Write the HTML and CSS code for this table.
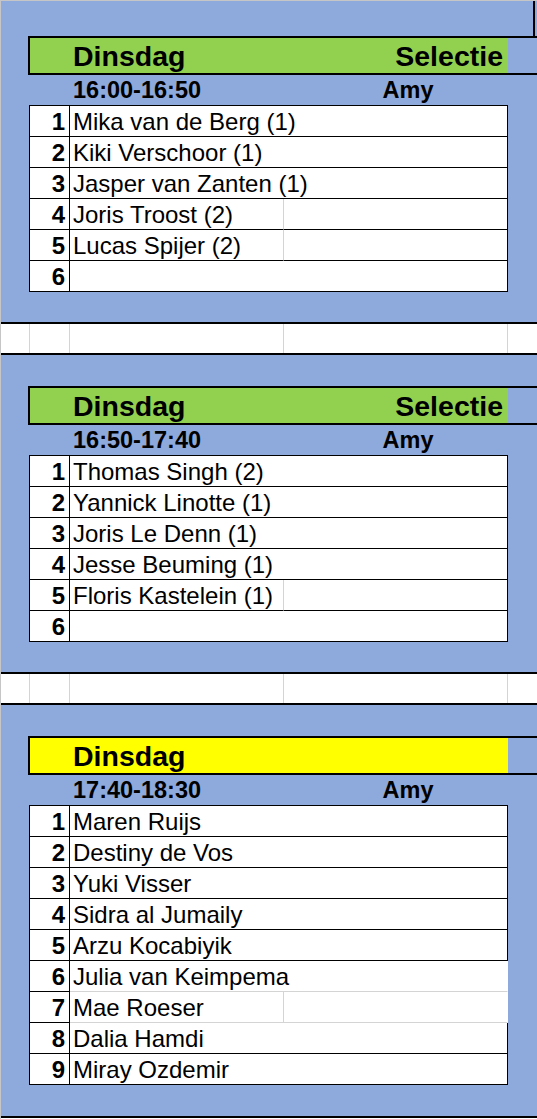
FILE: index.html
```html
<!DOCTYPE html>
<html lang="nl">
<head>
<meta charset="utf-8">
<title>Dinsdag rooster</title>
<link rel="stylesheet" href="styles.css">
</head>
<body>
<div class="sheet">

  <section class="block">
    <div class="lead lead-first"></div>
    <div class="head green">
      <div class="fill"></div>
      <div class="fill day">Dinsdag</div>
      <div class="fill tag">Selectie</div>
      <div></div>
    </div>
    <div class="time">
      <div></div>
      <div class="slot">16:00-16:50</div>
      <div class="trainer">Amy</div>
    </div>
    <div class="roster">
      <div class="row"><div class="num">1</div><div class="c">Mika van de Berg (1)</div><div class="d"></div></div>
      <div class="row"><div class="num">2</div><div class="c">Kiki Verschoor (1)</div><div class="d"></div></div>
      <div class="row"><div class="num">3</div><div class="c">Jasper van Zanten (1)</div><div class="d"></div></div>
      <div class="row split"><div class="num">4</div><div class="c">Joris Troost (2)</div><div class="d"></div></div>
      <div class="row split"><div class="num">5</div><div class="c">Lucas Spijer (2)</div><div class="d"></div></div>
      <div class="row"><div class="num">6</div><div class="c"></div><div class="d"></div></div>
    </div>
    <div class="tail"></div>
  </section>

  <div class="sep"><span></span><span></span><span></span><span></span><span></span></div>

  <section class="block">
    <div class="lead"></div>
    <div class="head green">
      <div class="fill"></div>
      <div class="fill day">Dinsdag</div>
      <div class="fill tag">Selectie</div>
      <div></div>
    </div>
    <div class="time">
      <div></div>
      <div class="slot">16:50-17:40</div>
      <div class="trainer">Amy</div>
    </div>
    <div class="roster">
      <div class="row"><div class="num">1</div><div class="c">Thomas Singh (2)</div><div class="d"></div></div>
      <div class="row"><div class="num">2</div><div class="c">Yannick Linotte (1)</div><div class="d"></div></div>
      <div class="row"><div class="num">3</div><div class="c">Joris Le Denn (1)</div><div class="d"></div></div>
      <div class="row"><div class="num">4</div><div class="c">Jesse Beuming (1)</div><div class="d"></div></div>
      <div class="row split"><div class="num">5</div><div class="c">Floris Kastelein (1)</div><div class="d"></div></div>
      <div class="row"><div class="num">6</div><div class="c"></div><div class="d"></div></div>
    </div>
    <div class="tail"></div>
  </section>

  <div class="sep"><span></span><span></span><span></span><span></span><span></span></div>

  <section class="block">
    <div class="lead"></div>
    <div class="head yellow">
      <div class="fill"></div>
      <div class="fill day">Dinsdag</div>
      <div class="fill tag"></div>
      <div></div>
    </div>
    <div class="time">
      <div></div>
      <div class="slot">17:40-18:30</div>
      <div class="trainer">Amy</div>
    </div>
    <div class="roster">
      <div class="row"><div class="num">1</div><div class="c">Maren Ruijs</div><div class="d"></div></div>
      <div class="row"><div class="num">2</div><div class="c">Destiny de Vos</div><div class="d"></div></div>
      <div class="row"><div class="num">3</div><div class="c">Yuki Visser</div><div class="d"></div></div>
      <div class="row"><div class="num">4</div><div class="c">Sidra al Jumaily</div><div class="d"></div></div>
      <div class="row"><div class="num">5</div><div class="c">Arzu Kocabiyik</div><div class="d"></div></div>
      <div class="row loose"><div class="num">6</div><div class="c">Julia van Keimpema</div><div class="d"></div></div>
      <div class="row loose split"><div class="num">7</div><div class="c">Mae Roeser</div><div class="d"></div></div>
      <div class="row"><div class="num">8</div><div class="c">Dalia Hamdi</div><div class="d"></div></div>
      <div class="row"><div class="num">9</div><div class="c">Miray Ozdemir</div><div class="d"></div></div>
    </div>
    <div class="tail tail-last"></div>
  </section>

  <div class="end"></div>
</div>
</body>
</html>
```

FILE: styles.css
```css
* { box-sizing: border-box; }
html, body { margin: 0; padding: 0; }
body {
  background: #ffffff;
  font-family: "Liberation Sans", Arial, sans-serif;
  color: #000;
}
.sheet {
  width: 537px;
  height: 1119px;
  overflow: hidden;
  background: #8ea9db;
  border-top: 1px solid #c6c6c6;
  border-left: 1px solid #c6c6c6;
}

.lead { height: 31px; }
.lead-first {
  height: 35px;
  margin-right: 2px;
  border-right: 2px solid #000;
}

.head {
  margin-left: 27px;
  height: 39px;
  border-top: 2px solid #000;
  border-bottom: 2px solid #000;
  border-left: 2px solid #000;
  display: grid;
  grid-template-columns: 39px 214px 225px 1fr;
  font-weight: 700;
  font-size: 28.5px;
  line-height: 34px;
}
.head .fill { padding-top: 1px; }
.green .fill { background: #92d050; }
.yellow .fill { background: #ffff00; }
.day { padding-left: 4px; white-space: nowrap; }
.tag { text-align: right; padding-right: 5px; white-space: nowrap; }

.time {
  margin-left: 29px;
  height: 30px;
  display: grid;
  grid-template-columns: 39px 214px 1fr;
  font-weight: 700;
  font-size: 23.5px;
  line-height: 29px;
  padding-top: 1px;
}
.slot { padding-left: 4px; white-space: nowrap; }
.trainer { text-align: center; padding-right: 4px; }

.roster {
  margin-left: 28px;
  width: 479px;
  border-top: 1px solid #000;
  border-left: 1px solid #000;
}
.row {
  display: grid;
  grid-template-columns: 40px 213px 225px;
  height: 31px;
  background: #fff;
  font-size: 24px;
  line-height: 29px;
}
.num {
  border-right: 1px solid #000;
  border-bottom: 1px solid #000;
  text-align: right;
  padding-right: 4px;
  padding-top: 1px;
  font-weight: 700;
}
.c {
  border-bottom: 1px solid #000;
  padding-left: 3px;
  padding-top: 1px;
  white-space: nowrap;
}
.d {
  border-right: 1px solid #000;
  border-bottom: 1px solid #000;
}
.split .d { border-left: 1px solid #d4d4d4; }
.loose .c, .loose .d { border-bottom-color: #d4d4d4; }
.loose .d { border-right-color: transparent; }

.tail { height: 30px; }
.tail-last { height: 31px; }

.sep {
  display: grid;
  grid-template-columns: 28px 40px 214px 224px 1fr;
  height: 33px;
  border-top: 2px solid #000;
  border-bottom: 2px solid #000;
  background: #fff;
}
.sep span + span { border-left: 1px solid #d4d4d4; }

.end {
  height: 10px;
  border-top: 2px solid #000;
  background: #fff;
}
```
